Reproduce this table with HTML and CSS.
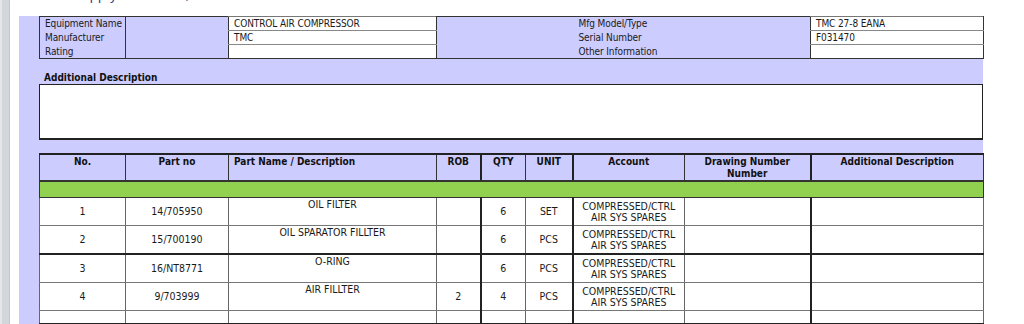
FILE: index.html
```html
<!DOCTYPE html>
<html>

<head>
    <title>Supply Order List</title>
    <link rel="stylesheet" href="styles.css">
</head>

<body>
    <div class="frame-edge"></div>

    <div class="page">
        <div class="title"><span>Supply Order List,</span></div>

        <div class="sheet">
            <table class="info">
                <colgroup>
                    <col style="width: 86px">
                    <col style="width: 103px">
                    <col style="width: 208px">
                    <col style="width: 137px">
                    <col style="width: 237px">
                    <col style="width: 173px">
                </colgroup>
                <tr>
                    <td class="lbl">Equipment Name</td>
                    <td></td>
                    <td class="val">CONTROL AIR COMPRESSOR</td>
                    <td></td>
                    <td>Mfg Model/Type</td>
                    <td class="val">TMC 27-8 EANA</td>
                </tr>
                <tr>
                    <td class="lbl">Manufacturer</td>
                    <td></td>
                    <td class="val">TMC</td>
                    <td></td>
                    <td>Serial Number</td>
                    <td class="val">F031470</td>
                </tr>
                <tr>
                    <td class="lbl">Rating</td>
                    <td></td>
                    <td class="val"></td>
                    <td></td>
                    <td>Other Information</td>
                    <td class="val"></td>
                </tr>
            </table>

            <div class="desc-label">Additional Description</div>
            <div class="desc-box"></div>

            <table class="parts">
                <colgroup>
                    <col style="width: 86px">
                    <col style="width: 103px">
                    <col style="width: 208px">
                    <col style="width: 44px">
                    <col style="width: 45px">
                    <col style="width: 47px">
                    <col style="width: 112px">
                    <col style="width: 126px">
                    <col style="width: 173px">
                </colgroup>
                <tr class="head">
                    <th>No.</th>
                    <th>Part no</th>
                    <th class="left">Part Name / Description</th>
                    <th>ROB</th>
                    <th class="strong">QTY</th>
                    <th>UNIT</th>
                    <th class="strong">Account</th>
                    <th>Drawing Number<br>Number</th>
                    <th class="strong">Additional Description</th>
                </tr>
                <tr class="group">
                    <td colspan="9"></td>
                </tr>
                <tr>
                    <td>1</td>
                    <td>14/705950</td>
                    <td class="name">OIL FILTER</td>
                    <td></td>
                    <td class="strong">6</td>
                    <td>SET</td>
                    <td class="strong">COMPRESSED/CTRL<br>AIR SYS SPARES</td>
                    <td></td>
                    <td class="strong"></td>
                </tr>
                <tr class="split">
                    <td>2</td>
                    <td>15/700190</td>
                    <td class="name">OIL SPARATOR FILLTER</td>
                    <td></td>
                    <td class="strong">6</td>
                    <td>PCS</td>
                    <td class="strong">COMPRESSED/CTRL<br>AIR SYS SPARES</td>
                    <td></td>
                    <td class="strong"></td>
                </tr>
                <tr>
                    <td>3</td>
                    <td>16/NT8771</td>
                    <td class="name">O-RING</td>
                    <td></td>
                    <td class="strong">6</td>
                    <td>PCS</td>
                    <td class="strong">COMPRESSED/CTRL<br>AIR SYS SPARES</td>
                    <td></td>
                    <td class="strong"></td>
                </tr>
                <tr>
                    <td>4</td>
                    <td>9/703999</td>
                    <td class="name">AIR FILLTER</td>
                    <td>2</td>
                    <td class="strong">4</td>
                    <td>PCS</td>
                    <td class="strong">COMPRESSED/CTRL<br>AIR SYS SPARES</td>
                    <td></td>
                    <td class="strong"></td>
                </tr>
                <tr class="blank split">
                    <td></td>
                    <td></td>
                    <td></td>
                    <td></td>
                    <td class="strong"></td>
                    <td></td>
                    <td class="strong"></td>
                    <td></td>
                    <td class="strong"></td>
                </tr>
                <tr>
                    <td></td>
                    <td></td>
                    <td class="name"></td>
                    <td></td>
                    <td class="strong"></td>
                    <td></td>
                    <td class="strong"></td>
                    <td></td>
                    <td class="strong"></td>
                </tr>
            </table>
        </div>
    </div>
</body>

</html>
```

FILE: styles.css
```css
body {
    margin: 0;
    display: flex;
    height: 324px;
    overflow: hidden;
    background-color: #fff;
    font-family: "DejaVu Sans Condensed", "DejaVu Sans", Verdana, sans-serif;
    font-size: 10px;
    color: #1a1a1a;
}

.frame-edge {
    width: 10px;
    flex-shrink: 0;
    background: linear-gradient(to right, #e4e6e9 0 2px, #d3d7dc 2px 9px, #c4c8cd 9px 10px);
}

.page {
    flex: 1;
    padding-left: 9px;
}

.title {
    height: 16px;
    overflow: hidden;
}

.title span {
    display: block;
    margin-top: -12px;
    padding-left: 54px;
    font-family: "DejaVu Sans", sans-serif;
    font-size: 13px;
    line-height: 16px;
    color: #243f86;
}

.sheet {
    width: 944px;
    min-height: 320px;
    padding-left: 20px;
    background-color: #ccccff;
}

table {
    border-collapse: collapse;
    table-layout: fixed;
    width: 944px;
}

/* equipment header */
.info {
    border: 1px solid #333;
}

.info td {
    height: 13px;
    padding: 0 5px;
    line-height: 13px;
    white-space: nowrap;
    letter-spacing: -0.1px;
}

.info .lbl {
    border-right: 1px solid #333;
}

.info .val {
    background-color: #fff;
    border: 1px solid #333;
    border-top-color: #888;
    border-bottom-color: #888;
}

.info tr:first-child .val {
    border-top-color: #777;
}

.info tr:last-child .val {
    border-bottom-color: #333;
}

.desc-label {
    padding: 13px 5px 1px;
    line-height: 11px;
    font-weight: bold;
    color: #111;
}

.desc-box {
    height: 53px;
    margin-bottom: 13px;
    background-color: #fff;
    border: 1px solid #222;
    border-bottom-width: 2px;
}

/* parts list */
.parts {
    border: 1px solid #222;
    border-top-width: 2px;
}

.parts th {
    height: 23px;
    padding: 1px 2px 0;
    vertical-align: top;
    line-height: 12px;
    font-weight: bold;
    color: #111;
    border: 1px solid #333;
    border-bottom-width: 2px;
}

.parts th.left {
    text-align: left;
    padding-left: 5px;
}

.parts td {
    height: 26px;
    padding: 0 2px;
    text-align: center;
    font-size: 10.5px;
    line-height: 11px;
    background-color: #fff;
    border: 1px solid #666;
    border-top-color: #777;
    border-bottom-color: #777;
}

.parts .strong {
    border-left: 2px solid #222;
}

.parts td.name {
    vertical-align: top;
    padding-top: 1px;
}

.parts tr.group td {
    height: 15px;
    padding: 0;
    background-color: #92d050;
    border: 1px solid #333;
}

.parts tr.split td {
    border-bottom: 2px solid #222;
}

.parts tr.blank td {
    height: 12px;
}
```
